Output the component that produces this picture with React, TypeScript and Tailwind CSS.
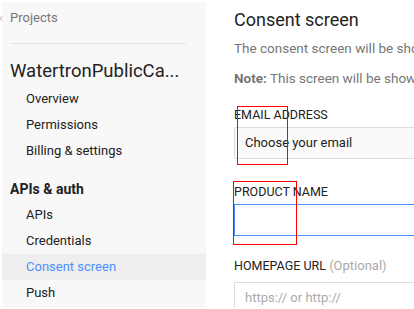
const navTop = ["Overview", "Permissions", "Billing & settings"];
const navApis = ["APIs", "Credentials", "Consent screen", "Push"];

const NavItem = ({ label, active }: { label: string; active?: boolean }) => (
  <div
    className={`h-[26px] pl-[24px] text-[13px] leading-[26px] ${
      active ? "bg-[#eeeeee] text-[#4d8ffd]" : "text-[#222]"
    }`}
  >
    {label}
  </div>
);

const Field = ({
  label,
  optional,
  className,
  children,
}: {
  label: string;
  optional?: boolean;
  className?: string;
  children: React.ReactNode;
}) => (
  <div className={className}>
    <div className="text-[12.5px] leading-[16px] text-[#222] uppercase">
      {label}
      {optional && <span className="normal-case text-[#aaa] text-[13px]"> (Optional)</span>}
    </div>
    {children}
  </div>
);

export default function App() {
  return (
    <div
      className="relative flex h-[309px] w-[414px] overflow-hidden bg-white py-[2px] pl-[2px]"
      style={{ fontFamily: "Roboto, 'Liberation Sans', Arial, sans-serif" }}
    >
      {/* left nav */}
      <aside className="w-[204px] shrink-0 bg-[#f8f8f8]">
        <div className="flex h-[32px] items-center text-[13px] text-[#777]">
          <span className="-ml-[3px] w-[11px] text-[#bbb]">‹</span>
          <span>Projects</span>
        </div>
        <div className="mt-[9px] ml-[8px] h-px w-[176px] bg-[#e3e3e3]" />
        <div className="mt-[13px] h-[29px] pl-[8px] text-[18.5px] leading-[28px] text-[#222] whitespace-nowrap">
          WatertronPublicCa...
        </div>
        {navTop.map((l) => (
          <NavItem key={l} label={l} />
        ))}
        <div className="mt-[12px] h-[26px] pl-[8px] text-[14px] font-bold leading-[26px] text-[#222]">
          APIs &amp; auth
        </div>
        {navApis.map((l) => (
          <NavItem key={l} label={l} active={l === "Consent screen"} />
        ))}
      </aside>

      {/* main */}
      <main className="min-w-0 flex-1 overflow-hidden pl-[28px] whitespace-nowrap">
        <h1 className="mt-[6px] text-[18px] leading-[24px] text-[#222]">Consent screen</h1>
        <p className="mt-[6px] text-[13.5px] leading-[20px] text-[#777]">
          The consent screen will be shown to users whenever you request access to their private data.
        </p>
        <p className="mt-[10px] text-[13.5px] leading-[20px] text-[#777]">
          <span className="font-bold">Note:</span> This screen will be shown to all users of this project.
        </p>

        <Field label="Email address" className="mt-[19px]">
          <div className="mt-[4px] flex h-[32px] w-[400px] items-center rounded-[2px] border border-[#dcdcdc] bg-[#fafafa] pl-[10px] text-[13px] text-[#222]">
            Choose your email
          </div>
        </Field>

        <Field label="Product name" className="mt-[25px]">
          <div className="mt-[4px] h-[32px] w-[400px] border border-[#4d8ffd] bg-white" />
        </Field>

        <Field label="Homepage URL" optional className="mt-[22px]">
          <div className="mt-[8px] flex h-[32px] w-[400px] items-center border border-[#dcdcdc] bg-white pl-[10px] text-[13px] text-[#aaa]">
            https:// or http://
          </div>
        </Field>
      </main>

      {/* annotation boxes */}
      <div className="pointer-events-none absolute left-[237px] top-[106px] h-[59px] w-[51px] border border-[#ff0000]" />
      <div className="pointer-events-none absolute left-[233px] top-[181px] h-[64px] w-[64px] border border-[#ff0000]" />
    </div>
  );
}
